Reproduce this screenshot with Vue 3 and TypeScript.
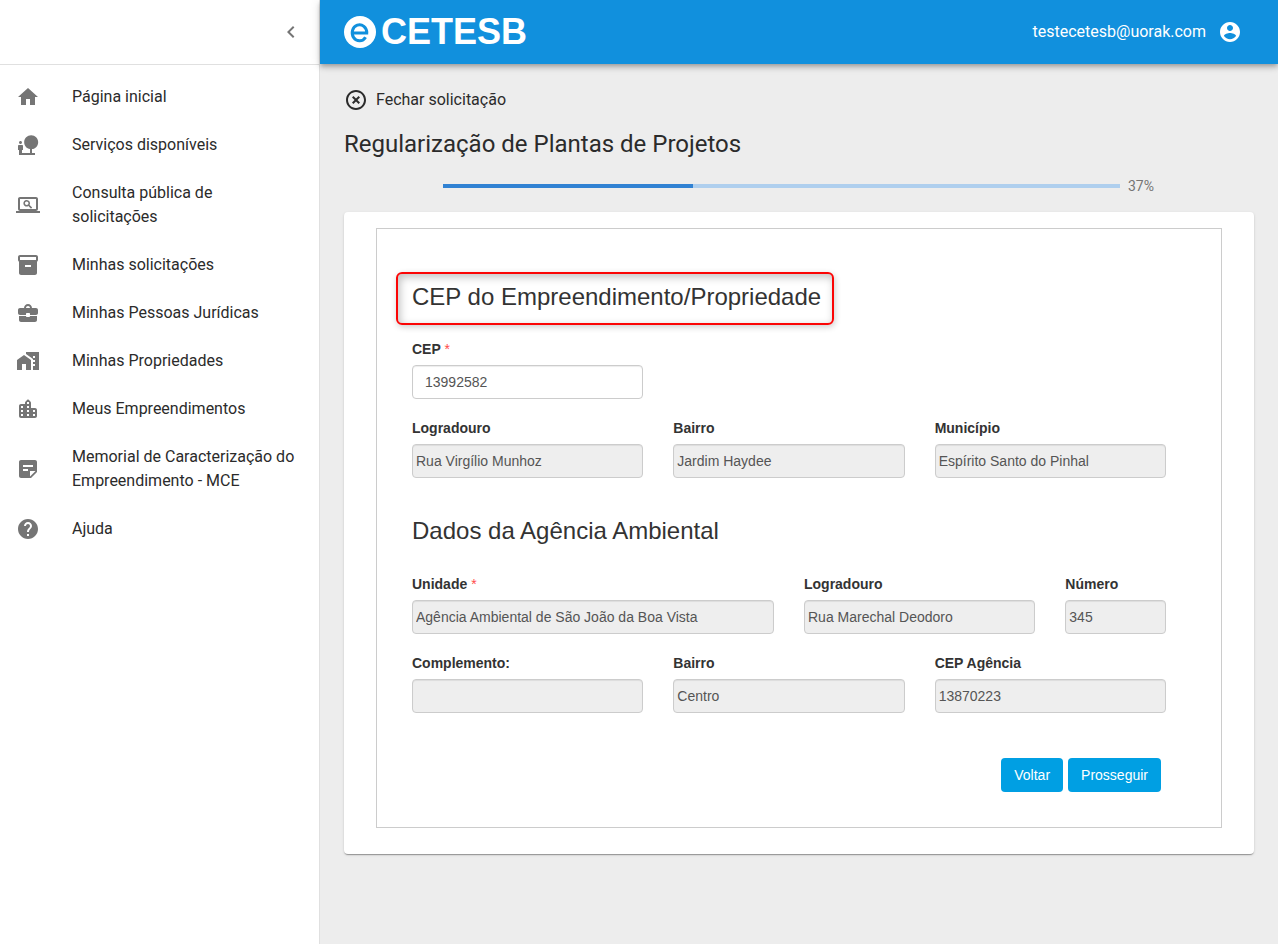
<script setup lang="ts">
import { ref } from 'vue'

interface NavItem {
  label: string
  path: string
}

interface Field {
  id: string
  label: string
  value: string
  span: 'two' | 'four' | 'six'
  required?: boolean
}

const navItems: NavItem[] = [
  { label: 'Página inicial', path: 'M10 20v-6h4v6h5v-8h3L12 3 2 12h3v8z' },
  {
    label: 'Serviços disponíveis',
    path: 'M22.17 9.17c0-3.87-3.13-7-7-7s-7 3.13-7 7c0 3.47 2.52 6.34 5.83 6.89V20H6v-3h1v-4c0-.55-.45-1-1-1H3c-.55 0-1 .45-1 1v4h1v5h16v-2h-3v-3.88c3.47-.41 6.17-3.36 6.17-6.95zM4.5 11c.83 0 1.5-.67 1.5-1.5S5.33 8 4.5 8 3 8.67 3 9.5 3.67 11 4.5 11z',
  },
  {
    label: 'Consulta pública de solicitações',
    path: 'M20 18c1.1 0 2-.9 2-2V6c0-1.1-.9-2-2-2H4c-1.1 0-2 .9-2 2v10c0 1.1.9 2 2 2H0v2h24v-2h-4zM4 6h16v10H4V6zM10.7 7A3.3 3.3 0 1 0 12.4 13.1L15 15.7 16.2 14.5 13.6 11.9A3.3 3.3 0 0 0 10.7 7zM10.7 8.5A1.8 1.8 0 1 1 10.7 12.1 1.8 1.8 0 0 1 10.7 8.5z',
  },
  {
    label: 'Minhas solicitações',
    path: 'M20 2H4c-1 0-2 .9-2 2v3.01c0 .72.43 1.34 1 1.69V20c0 1.1 1.1 2 2 2h14c.9 0 2-.9 2-2V8.7c.57-.35 1-.97 1-1.69V4c0-1.1-1-2-2-2zm-5 12H9v-2h6v2zm5-7H4V4h16v3z',
  },
  {
    label: 'Minhas Pessoas Jurídicas',
    path: 'M13 16h-2c-.55 0-1-.45-1-1H3.01v4c0 1.1.9 2 2 2H19c1.1 0 2-.9 2-2v-4h-7c0 .55-.45 1-1 1zm7-9h-4c0-2.21-1.79-4-4-4S8 4.79 8 7H4c-1.1 0-2 .9-2 2v3c0 1.11.89 2 2 2h6v-1c0-.55.45-1 1-1h2c.55 0 1 .45 1 1v1h6c1.1 0 2-.9 2-2V9c0-1.1-.9-2-2-2zM10 7c0-1.1.9-2 2-2s2 .9 2 2H10z',
  },
  {
    label: 'Minhas Propriedades',
    path: 'M1 11v10h5v-6h4v6h5V11L8 6zM10 3v1.97l7 5V11h2v2h-2v2h2v2h-2v4h6V3H10zm9 6h-2V7h2v2z',
  },
  {
    label: 'Meus Empreendimentos',
    path: 'M15 11V5.83c0-.53-.21-1.04-.59-1.41L12.7 2.71c-.39-.39-1.02-.39-1.41 0l-1.7 1.7C9.21 4.79 9 5.3 9 5.83V7H5c-1.1 0-2 .9-2 2v10c0 1.1.9 2 2 2h14c1.1 0 2-.9 2-2v-6c0-1.1-.9-2-2-2h-4zm-8 8H5v-2h2v2zm0-4H5v-2h2v2zm0-4H5V9h2v2zm6 8h-2v-2h2v2zm0-4h-2v-2h2v2zm0-4h-2V9h2v2zm0-4h-2V5h2v2zm6 12h-2v-2h2v2zm0-4h-2v-2h2v2z',
  },
  {
    label: 'Memorial de Caracterização do Empreendimento - MCE',
    path: 'M19 3H4.99C3.89 3 3 3.9 3 5l.01 14c0 1.1.89 2 1.99 2h10l6-6V5c0-1.1-.9-2-2-2zM7 8h10v2H7V8zm5 6H7v-2h5v2zm2 5.5V14h5.5L14 19.5z',
  },
  {
    label: 'Ajuda',
    path: 'M12 2C6.48 2 2 6.48 2 12s4.48 10 10 10 10-4.48 10-10S17.52 2 12 2zm1 17h-2v-2h2v2zm2.07-7.75l-.9.92C13.45 12.9 13 13.5 13 15h-2v-.5c0-1.1.45-2.1 1.17-2.83l1.24-1.26c.37-.36.59-.86.59-1.41 0-1.1-.9-2-2-2s-2 .9-2 2H8c0-2.21 1.79-4 4-4s4 1.79 4 4c0 .88-.36 1.68-.93 2.25z',
  },
]

const addressFields: Field[] = [
  { id: 'logradouro', label: 'Logradouro', value: 'Rua Virgílio Munhoz', span: 'four' },
  { id: 'bairro', label: 'Bairro', value: 'Jardim Haydee', span: 'four' },
  { id: 'municipio', label: 'Município', value: 'Espírito Santo do Pinhal', span: 'four' },
]

const agencyFields: Field[] = [
  { id: 'unidade', label: 'Unidade', value: 'Agência Ambiental de São João da Boa Vista', span: 'six', required: true },
  { id: 'ag-logradouro', label: 'Logradouro', value: 'Rua Marechal Deodoro', span: 'four' },
  { id: 'ag-numero', label: 'Número', value: '345', span: 'two' },
  { id: 'ag-complemento', label: 'Complemento:', value: '', span: 'four' },
  { id: 'ag-bairro', label: 'Bairro', value: 'Centro', span: 'four' },
  { id: 'ag-cep', label: 'CEP Agência', value: '13870223', span: 'four' },
]

const cep = ref('13992582')
const progress = ref(37)
</script>

<template>
  <div class="layout">
    <aside class="sidebar">
      <div class="sidebar-head">
        <button class="icon-button" type="button" aria-label="Recolher menu">
          <svg class="icon" viewBox="0 0 24 24"><path d="M15.41 7.41 14 6l-6 6 6 6 1.41-1.41L10.83 12z" /></svg>
        </button>
      </div>
      <nav class="nav">
        <a v-for="item in navItems" :key="item.label" class="nav-item" href="#">
          <svg class="icon" viewBox="0 0 24 24" aria-hidden="true"><path fill-rule="evenodd" :d="item.path" /></svg>
          <span>{{ item.label }}</span>
        </a>
      </nav>
    </aside>

    <div class="content">
      <header class="topbar">
        <a class="brand" href="#">
          <svg class="brand-mark" viewBox="0 0 32 32" aria-hidden="true">
            <circle cx="16" cy="16" r="16" fill="#fff" />
            <path d="M8 17H24.2M22.8 17A7.3 8 0 1 0 21.6 21.2" fill="none" stroke="#1190dd" stroke-width="3" />
          </svg>
          <span>CETESB</span>
        </a>
        <button class="account" type="button">
          <span>testecetesb@uorak.com</span>
          <svg class="icon" viewBox="0 0 24 24" aria-hidden="true">
            <path d="M12 2C6.48 2 2 6.48 2 12s4.48 10 10 10 10-4.48 10-10S17.52 2 12 2zm0 3c1.66 0 3 1.34 3 3s-1.34 3-3 3-3-1.34-3-3 1.34-3 3-3zm0 14.2c-2.5 0-4.71-1.28-6-3.22.03-1.99 4-3.08 6-3.08 1.99 0 5.97 1.09 6 3.08-1.29 1.94-3.5 3.22-6 3.22z" />
          </svg>
        </button>
      </header>

      <main class="main">
        <button class="close" type="button">
          <svg class="icon" viewBox="0 0 24 24" aria-hidden="true">
            <path d="M14.59 8 12 10.59 9.41 8 8 9.41 10.59 12 8 14.59 9.41 16 12 13.41 14.59 16 16 14.59 13.41 12 16 9.41zM12 2C6.47 2 2 6.47 2 12s4.47 10 10 10 10-4.47 10-10S17.53 2 12 2zm0 18c-4.41 0-8-3.59-8-8s3.59-8 8-8 8 3.59 8 8-3.59 8-8 8z" />
          </svg>
          <span>Fechar solicitação</span>
        </button>
        <h1 class="title">Regularização de Plantas de Projetos</h1>

        <div class="progress">
          <div class="track" role="progressbar" aria-label="Progresso" :aria-valuenow="progress" aria-valuemin="0" aria-valuemax="100">
            <div class="bar" :style="{ width: progress + '%' }"></div>
          </div>
          <span class="percent">{{ progress }}%</span>
        </div>

        <section class="card">
          <form class="panel" @submit.prevent>
            <h2 class="heading"><span class="marked">CEP do Empreendimento/Propriedade</span></h2>
            <div class="fields">
              <div class="field four">
                <label for="cep">CEP <span class="required">*</span></label>
                <input id="cep" v-model="cep" class="editable" type="text" />
              </div>
            </div>
            <div class="fields">
              <div v-for="f in addressFields" :key="f.id" class="field" :class="f.span">
                <label :for="f.id">{{ f.label }}</label>
                <input :id="f.id" type="text" :value="f.value" readonly />
              </div>
            </div>

            <h2 class="heading">Dados da Agência Ambiental</h2>
            <div class="fields">
              <div v-for="f in agencyFields" :key="f.id" class="field" :class="f.span">
                <label :for="f.id">{{ f.label }} <span v-if="f.required" class="required">*</span></label>
                <input :id="f.id" type="text" :value="f.value" readonly />
              </div>
            </div>

            <div class="actions">
              <button class="action" type="button">Voltar</button>
              <button class="action" type="submit">Prosseguir</button>
            </div>
          </form>
        </section>
      </main>
    </div>
  </div>
</template>

<style>
body {
  margin: 0;
  background: #ededed;
}
</style>

<style scoped>
*,
*::before,
*::after {
  box-sizing: border-box;
}

.layout {
  display: flex;
  min-height: 100vh;
  font-family: Roboto, "Liberation Sans", sans-serif;
  font-size: 16px;
  line-height: 24px;
  color: #2b2b2b;
  background: #ededed;
}

button {
  padding: 0;
  border: 0;
  background: none;
  font: inherit;
  color: inherit;
  cursor: pointer;
}

.icon {
  flex: none;
  display: block;
  width: 24px;
  height: 24px;
  fill: currentColor;
}

.sidebar {
  flex: none;
  width: 320px;
  background: #fff;
  border-right: 1px solid #e0e0e0;
}

.sidebar-head {
  display: flex;
  align-items: center;
  justify-content: flex-end;
  height: 65px;
  padding-right: 16px;
  border-bottom: 1px solid #e0e0e0;
}

.icon-button {
  color: #757575;
}

.nav {
  padding: 8px 0;
}

.nav-item {
  display: flex;
  align-items: center;
  gap: 32px;
  padding: 12px 20px 12px 16px;
  color: #2b2b2b;
  text-decoration: none;
}

.nav-item .icon {
  color: #757575;
}

.content {
  flex: 1;
  min-width: 0;
}

.topbar {
  display: flex;
  align-items: center;
  justify-content: space-between;
  height: 64px;
  padding: 0 36px 0 24px;
  background: #1190dd;
  color: #fff;
  box-shadow: 0 2px 4px -1px rgba(0, 0, 0, 0.2), 0 4px 5px rgba(0, 0, 0, 0.14), 0 1px 10px rgba(0, 0, 0, 0.12);
}

.brand {
  display: flex;
  align-items: center;
  gap: 5px;
  color: #fff;
  font-family: "Liberation Sans", Arial, sans-serif;
  font-size: 36px;
  font-weight: 700;
  line-height: 40px;
  text-decoration: none;
}

.brand-mark {
  width: 32px;
  height: 32px;
}

.account {
  display: flex;
  align-items: center;
  gap: 12px;
}

.main {
  padding: 24px;
}

.close {
  display: flex;
  align-items: center;
  gap: 8px;
}

.title {
  margin: 16px 0;
  font-size: 24px;
  font-weight: 400;
  line-height: 32px;
}

.progress {
  display: flex;
  align-items: center;
  gap: 8px;
  width: 80%;
  height: 20px;
  margin: 0 auto;
  padding-left: 8px;
}

.track {
  flex: 1;
  height: 4px;
  background: #afcfee;
}

.bar {
  height: 100%;
  background: #3182d3;
}

.percent {
  width: 35px;
  font-size: 14px;
  line-height: 20px;
  color: #757575;
}

.card {
  margin-top: 16px;
  padding: 16px 32px 26px;
  background: #fff;
  border-radius: 4px;
  box-shadow: 0 2px 1px -1px rgba(0, 0, 0, 0.2), 0 1px 1px rgba(0, 0, 0, 0.14), 0 1px 3px rgba(0, 0, 0, 0.12);
}

.panel {
  padding: 55px 55px 35px 35px;
  border: 1px solid #ccc;
  color: #333;
  font-family: "Liberation Sans", Arial, sans-serif;
  font-size: 14px;
  line-height: 20px;
}

.heading {
  margin: 0 0 29px;
  font-size: 24px;
  font-weight: 400;
  line-height: 26px;
}

.fields + .heading {
  margin: 40px 0 30px;
}

.marked {
  position: relative;
}

/* Callout frame drawn around the highlighted heading */
.marked::after {
  content: "";
  position: absolute;
  inset: -11px -13px -15px -16px;
  border: 2px solid #fb0505;
  border-radius: 6px;
  box-shadow: 1px 2px 6px rgba(0, 0, 0, 0.2), inset 2px 3px 8px rgba(0, 0, 0, 0.25);
  pointer-events: none;
}

.fields {
  display: grid;
  grid-template-columns: repeat(12, minmax(0, 1fr));
  gap: 19px 30px;
}

.fields + .fields {
  margin-top: 19px;
}

.field {
  display: flex;
  flex-direction: column;
  gap: 6px;
}

.two {
  grid-column: span 2;
}

.four {
  grid-column: span 4;
}

.six {
  grid-column: span 6;
}

label {
  font-weight: 700;
}

.required {
  color: #ff4b4b;
  font-weight: 400;
}

input {
  width: 100%;
  height: 34px;
  padding: 6px 3px;
  border: 1px solid #ccc;
  border-radius: 4px;
  background: #eee;
  box-shadow: inset 0 1px 1px rgba(0, 0, 0, 0.075);
  color: #555;
  font: inherit;
}

.editable {
  padding: 6px 12px;
  background: #fff;
}

.actions {
  display: flex;
  justify-content: flex-end;
  gap: 5px;
  margin-top: 45px;
  padding-right: 5px;
}

.action {
  height: 34px;
  padding: 0 13px;
  border-radius: 4px;
  background: #009fe3;
  color: #fff;
}
</style>
